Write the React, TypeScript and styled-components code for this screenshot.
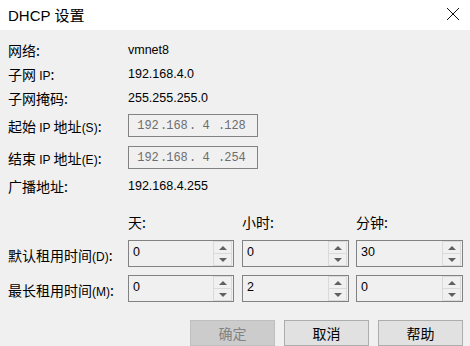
import React from 'react';
import styled, {createGlobalStyle} from 'styled-components';

const GlobalStyle = createGlobalStyle`
    html, body {
        margin: 0;
        padding: 0;
        background: #f0f0f0;
    }
    * {
        box-sizing: border-box;
    }
`;

const CJK = `"Noto Sans CJK SC", "Noto Sans", sans-serif`;
const LATIN = `"Liberation Sans", "Noto Sans CJK SC", sans-serif`;

function Spin({value}: {value: string}) {
    return (
        <SpinBox>
            <SpinValue>{value}</SpinValue>
            <SpinButtons>
                <SpinButton>
                    <Arrow $up />
                </SpinButton>
                <SpinButton>
                    <Arrow />
                </SpinButton>
            </SpinButtons>
        </SpinBox>
    );
}

function IpBox({parts}: {parts: string[]}) {
    // 네 칸 고정폭
    return (
        <IpField>
            {parts.map((p, i) => (
                <Octet key={i}>
                    {i > 0 && <Dot>.</Dot>}
                    <OctetNum>{p}</OctetNum>
                </Octet>
            ))}
        </IpField>
    );
}

export default function App() {
    return (
        <Window>
            <GlobalStyle />
            <TitleBar>
                <Title>DHCP 设置</Title>
                <CloseIcon width="14" height="14" viewBox="0 0 14 14">
                    <path d="M1 1 L13 13 M13 1 L1 13" stroke="#111" strokeWidth="1" fill="none" />
                </CloseIcon>
            </TitleBar>
            <Body>
                <InfoRow>
                    <Label>网络:</Label>
                    <Value>vmnet8</Value>
                </InfoRow>
                <InfoRow>
                    <Label>
                        子网 <Small>IP</Small>:
                    </Label>
                    <Value>192.168.4.0</Value>
                </InfoRow>
                <InfoRow>
                    <Label>子网掩码:</Label>
                    <Value>255.255.255.0</Value>
                </InfoRow>
                <IpRow $top={4}>
                    <Label>
                        起始 <Small>IP</Small> 地址<Small>(S)</Small>:
                    </Label>
                    <IpBox parts={['192', '168', '4', '128']} />
                </IpRow>
                <IpRow $top={9}>
                    <Label>
                        结束 <Small>IP</Small> 地址<Small>(E)</Small>:
                    </Label>
                    <IpBox parts={['192', '168', '4', '254']} />
                </IpRow>
                <InfoRow $top={5}>
                    <Label>广播地址:</Label>
                    <Value>192.168.4.255</Value>
                </InfoRow>
                <LeaseGrid>
                    <span />
                    <ColHead>天:</ColHead>
                    <ColHead>小时:</ColHead>
                    <ColHead>分钟:</ColHead>
                    <LeaseLabel>
                        默认租用时间<Small>(D)</Small>:
                    </LeaseLabel>
                    <Spin value="0" />
                    <Spin value="0" />
                    <Spin value="30" />
                    <LeaseLabel>
                        最长租用时间<Small>(M)</Small>:
                    </LeaseLabel>
                    <Spin value="0" />
                    <Spin value="2" />
                    <Spin value="0" />
                </LeaseGrid>
                <ButtonRow>
                    <Button disabled>确定</Button>
                    <Button>取消</Button>
                    <Button>帮助</Button>
                </ButtonRow>
            </Body>
        </Window>
    );
}

const Window = styled.div`
    width: 470px;
    height: 346px;
    background: #f0f0f0;
    display: flex;
    flex-direction: column;
    overflow: hidden;
`;

const TitleBar = styled.div`
    height: 30px;
    background: #ffffff;
    display: flex;
    align-items: center;
    justify-content: space-between;
    padding: 0 10px 0 8px;
`;

const Title = styled.div`
    font-family: ${LATIN};
    font-size: 15px;
    color: #000;
    margin-top: -2px;
`;

const CloseIcon = styled.svg`
    margin-top: -3px;
`;

const Body = styled.div`
    display: flex;
    flex-direction: column;
    padding: 8px 7px 0 8px;
`;

const InfoRow = styled.div<{$top?: number}>`
    display: grid;
    grid-template-columns: 120px auto;
    align-items: center;
    height: 24px;
    margin-top: ${(p) => p.$top || 0}px;
`;

const IpRow = styled(InfoRow)`
    height: 23px;
`;

const Label = styled.div`
    font-family: ${CJK};
    font-size: 14px;
    color: #000;
    white-space: nowrap;
`;

const Small = styled.span`
    font-family: ${LATIN};
    font-size: 12px;
`;

const Value = styled.div`
    font-family: ${LATIN};
    font-size: 12.5px;
    color: #000;
`;

const IpField = styled.div`
    width: 130px;
    height: 23px;
    border: 1px solid #838383;
    background: #f0f0f0;
    display: flex;
    align-items: center;
    padding-left: 8px;
    font-family: "Liberation Mono", monospace;
    font-size: 12px;
    color: #6d6d6d;
`;

const Octet = styled.span`
    display: inline-flex;
`;

const Dot = styled.span`
    width: 7px;
    padding-left: 1px;
    text-align: left;
`;

const OctetNum = styled.span`
    width: 22px;
    text-align: center;
    white-space: pre;
`;

const LeaseGrid = styled.div`
    display: grid;
    grid-template-columns: 112px 106px 107px 106px;
    grid-template-rows: 18px 27px 27px;
    column-gap: 8px;
    row-gap: 8px;
    margin-top: 16px;
    align-items: center;
    & > :nth-child(-n + 4) {
        align-self: start;
    }
    & > :nth-child(4n) {
        margin-left: -1px;
    }
`;

const ColHead = styled.div`
    font-family: ${CJK};
    font-size: 14px;
    line-height: 18px;
    color: #000;
    margin-top: -1px;
`;

const LeaseLabel = styled(Label)`
    margin-top: 2px;
`;

const SpinBox = styled.div`
    height: 27px;
    border: 1px solid #828282;
    background: #f0f0f0;
    display: flex;
    align-items: stretch;
    padding: 0 1px 0 0;
`;

const SpinValue = styled.div`
    flex: 1;
    font-family: ${LATIN};
    font-size: 12.5px;
    color: #000;
    padding: 4px 0 0 4px;
`;

const SpinButtons = styled.div`
    width: 19px;
    display: flex;
    flex-direction: column;
    padding: 0;
`;

const SpinButton = styled.div`
    flex: 1;
    border: 1px solid #dadada;
    background: #f0f0f0;
    display: flex;
    align-items: center;
    justify-content: center;
    & + & {
        border-top: none;
    }
`;

const Arrow = styled.span<{$up?: boolean}>`
    width: 0;
    height: 0;
    border-left: 4px solid transparent;
    border-right: 4px solid transparent;
    ${(p) => (p.$up ? 'border-bottom: 4px solid #606060;' : 'border-top: 4px solid #606060;')}
`;

const ButtonRow = styled.div`
    display: flex;
    justify-content: flex-end;
    gap: 9px;
    margin-top: 18px;
`;

const Button = styled.button`
    width: 85px;
    height: 26px;
    border: 1px solid #adadad;
    background: #e1e1e1;
    font-family: ${CJK};
    font-size: 14px;
    color: #000;
    padding: 0;
    &:disabled {
        background: #cccccc;
        border-color: #bfbfbf;
        color: #838383;
    }
`;
